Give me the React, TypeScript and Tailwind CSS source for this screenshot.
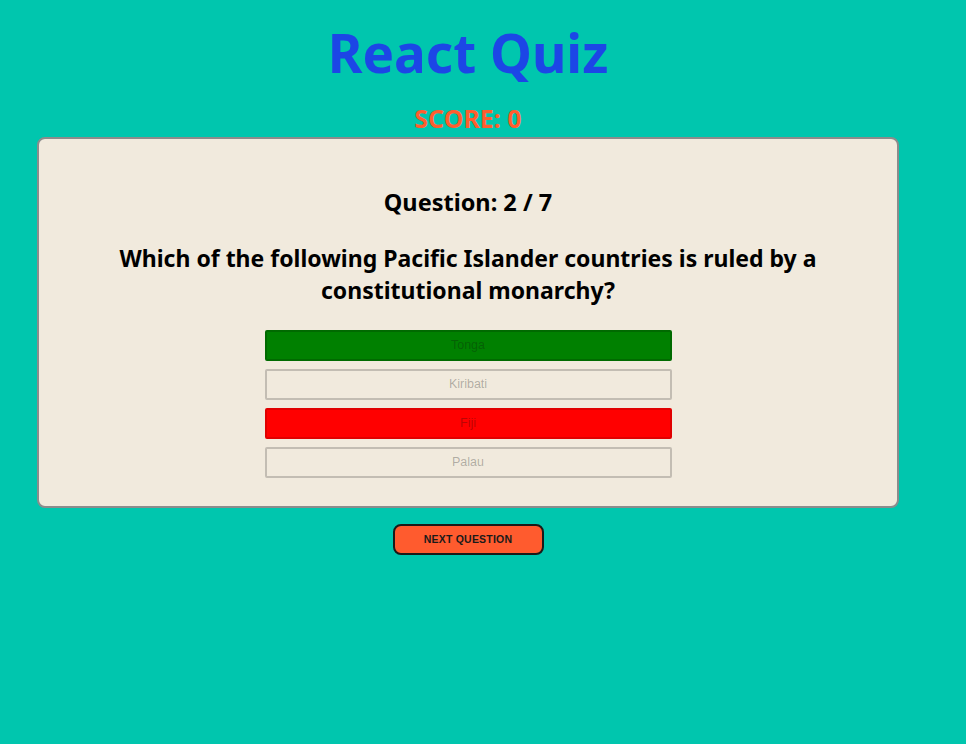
import React from "react";

const answers = [
  { text: "Tonga", cls: "bg-[#008000] border-[#006a00]" },
  { text: "Kiribati", cls: "bg-[#f1eadd] border-[#c3bdb3]" },
  { text: "Fiji", cls: "bg-[#ff0000] border-[#e00000]" },
  { text: "Palau", cls: "bg-[#f1eadd] border-[#c3bdb3]" },
];

export default function App() {
  return (
    <div className="min-h-[744px] w-full bg-[#00c6ae]" style={{ fontFamily: '"Noto Sans", "Open Sans", sans-serif' }}>
      <div className="w-[936px] flex flex-col items-center">
        <h1 className="mt-[13px] text-[53px] leading-[80px] font-bold text-[#1c46e6]">React Quiz</h1>
        <div className="mt-[10px] text-[25px] leading-[30px] font-bold text-[#ff5e2e]">SCORE: 0</div>
        <div className="mt-[4px] w-[862px] rounded-[8px] border-2 border-[#8c8c8c] bg-[#f1eadd] flex flex-col items-center pt-[48px] pb-[28px]">
          <div className="text-[23.5px] leading-[30px] font-bold text-black">Question: 2 / 7</div>
          <div className="mt-[25px] w-[730px] text-center text-[23px] leading-[32px] font-bold text-black">
            Which of the following Pacific Islander countries is ruled by a constitutional monarchy?
          </div>
          <div className="mt-[24px] flex flex-col gap-[8px]">
            {answers.map((a) => (
              <button
                key={a.text}
                disabled
                className={`w-[407px] h-[31px] border-2 rounded-[2px] text-[12.5px] text-[rgba(16,16,16,0.3)] ${a.cls}`}
                style={{ fontFamily: '"Liberation Sans", Arial, sans-serif' }}
              >
                {a.text}
              </button>
            ))}
          </div>
        </div>
        <button
          className="mt-[16px] w-[151px] h-[31px] rounded-[8px] border-2 border-[#1a1a1a] bg-[#ff5b2e] text-[10.5px] font-bold text-[#1a1a1a] tracking-[0.2px]"
          style={{ fontFamily: '"Liberation Sans", Arial, sans-serif' }}
        >
          NEXT QUESTION
        </button>
      </div>
    </div>
  );
}
